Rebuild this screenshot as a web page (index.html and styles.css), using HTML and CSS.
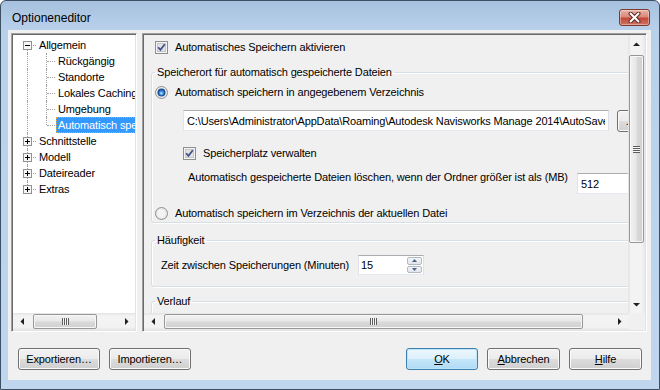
FILE: index.html
```html
<!DOCTYPE html>
<html lang="de">
<head>
    <meta charset="UTF-8">
    <title>Optioneneditor</title>
    <link rel="stylesheet" href="styles.css">
</head>
<body>
    <div class="window">
        <div class="titlebar">
            <span class="title">Optioneneditor</span>
            <span class="close-btn">
                <svg width="13" height="11" viewBox="0 0 13 11">
                    <path d="M2.5 1.5 L10.5 9.5 M10.5 1.5 L2.5 9.5" stroke="#5b2b26" stroke-width="4" stroke-linecap="round"/>
                    <path d="M2.5 1.5 L10.5 9.5 M10.5 1.5 L2.5 9.5" stroke="#fff" stroke-width="2" stroke-linecap="round"/>
                </svg>
            </span>
        </div>

        <div class="client">
            <div class="panels">
                <!-- Tree of option pages -->
                <div class="tree-panel sunken">
                    <ul class="tree">
                        <li class="tree-row">
                            <span class="guide root first">
                                <svg class="expander" width="9" height="9" viewBox="0 0 9 9"><rect x="0.5" y="0.5" width="8" height="8" fill="#f6f6f6" stroke="#919191"/><path d="M2 4.5H7" stroke="#000"/></svg>
                            </span>
                            <span class="tree-label">Allgemein</span>
                        </li>
                        <li class="tree-row">
                            <span class="guide pass"></span>
                            <span class="guide child"></span>
                            <span class="tree-label">Rückgängig</span>
                        </li>
                        <li class="tree-row">
                            <span class="guide pass"></span>
                            <span class="guide child"></span>
                            <span class="tree-label">Standorte</span>
                        </li>
                        <li class="tree-row">
                            <span class="guide pass"></span>
                            <span class="guide child"></span>
                            <span class="tree-label">Lokales Caching</span>
                        </li>
                        <li class="tree-row">
                            <span class="guide pass"></span>
                            <span class="guide child"></span>
                            <span class="tree-label">Umgebung</span>
                        </li>
                        <li class="tree-row">
                            <span class="guide pass"></span>
                            <span class="guide child last"></span>
                            <span class="tree-label selected">Automatisch speichern</span>
                        </li>
                        <li class="tree-row">
                            <span class="guide root">
                                <svg class="expander" width="9" height="9" viewBox="0 0 9 9"><rect x="0.5" y="0.5" width="8" height="8" fill="#f6f6f6" stroke="#919191"/><path d="M2 4.5H7M4.5 2V7" stroke="#000"/></svg>
                            </span>
                            <span class="tree-label">Schnittstelle</span>
                        </li>
                        <li class="tree-row">
                            <span class="guide root">
                                <svg class="expander" width="9" height="9" viewBox="0 0 9 9"><rect x="0.5" y="0.5" width="8" height="8" fill="#f6f6f6" stroke="#919191"/><path d="M2 4.5H7M4.5 2V7" stroke="#000"/></svg>
                            </span>
                            <span class="tree-label">Modell</span>
                        </li>
                        <li class="tree-row">
                            <span class="guide root">
                                <svg class="expander" width="9" height="9" viewBox="0 0 9 9"><rect x="0.5" y="0.5" width="8" height="8" fill="#f6f6f6" stroke="#919191"/><path d="M2 4.5H7M4.5 2V7" stroke="#000"/></svg>
                            </span>
                            <span class="tree-label">Dateireader</span>
                        </li>
                        <li class="tree-row">
                            <span class="guide root last">
                                <svg class="expander" width="9" height="9" viewBox="0 0 9 9"><rect x="0.5" y="0.5" width="8" height="8" fill="#f6f6f6" stroke="#919191"/><path d="M2 4.5H7M4.5 2V7" stroke="#000"/></svg>
                            </span>
                            <span class="tree-label">Extras</span>
                        </li>
                    </ul>
                    <div class="hscroll">
                        <span class="scroll-arrow"><svg width="4" height="7" viewBox="0 0 4 7"><path d="M4 0V7L0.5 3.5Z"/></svg></span>
                        <span class="thumb thumb-h tree-thumb"><span class="grip grip-h"></span></span>
                        <span class="scroll-arrow"><svg width="4" height="7" viewBox="0 0 4 7"><path d="M0 0V7L3.5 3.5Z"/></svg></span>
                    </div>
                </div>

                <!-- Option page -->
                <div class="options-panel sunken">
                    <div class="options-main">
                        <div class="options-content">
                            <div class="options-inner">
                                <label class="check-row top-check">
                                    <svg class="checkbox" width="13" height="13" viewBox="0 0 13 13"><rect x="0.5" y="0.5" width="12" height="12" fill="#f4f4f4" stroke="#8e8f8f"/><rect x="2.5" y="2.5" width="8" height="8" fill="#e2e2e2" stroke="#c6c6c6"/><path d="M3.2 6.3L5.4 8.8L9.8 3.2" fill="none" stroke="#3b4f8c" stroke-width="1.7"/></svg>
                                    <span>Automatisches Speichern aktivieren</span>
                                </label>

                                <fieldset class="group">
                                    <legend>Speicherort für automatisch gespeicherte Dateien</legend>
                                    <label class="check-row radio-first">
                                        <svg class="radio" width="13" height="13" viewBox="0 0 13 13"><circle cx="6.5" cy="6.5" r="6" fill="#ececec" stroke="#8e8f8f"/><circle cx="6.5" cy="6.5" r="4" fill="#1c4f94"/><circle cx="6.5" cy="6.8" r="2.6" fill="#3b8be0"/><circle cx="6.3" cy="7.3" r="1.2" fill="#9fd6f7"/></svg>
                                        <span>Automatisch speichern in angegebenem Verzeichnis</span>
                                    </label>
                                    <div class="path-row">
                                        <input class="textbox path-box" type="text" value="C:\Users\Administrator\AppData\Roaming\Autodesk Navisworks Manage 2014\AutoSave">
                                        <span class="btn browse-btn">...</span>
                                    </div>
                                    <label class="check-row space-check">
                                        <svg class="checkbox" width="13" height="13" viewBox="0 0 13 13"><rect x="0.5" y="0.5" width="12" height="12" fill="#f4f4f4" stroke="#8e8f8f"/><rect x="2.5" y="2.5" width="8" height="8" fill="#e2e2e2" stroke="#c6c6c6"/><path d="M3.2 6.3L5.4 8.8L9.8 3.2" fill="none" stroke="#3b4f8c" stroke-width="1.7"/></svg>
                                        <span>Speicherplatz verwalten</span>
                                    </label>
                                    <div class="size-row">
                                        <span class="size-label">Automatisch gespeicherte Dateien löschen, wenn der Ordner größer ist als (MB)</span>
                                        <input class="textbox size-box" type="text" value="512">
                                    </div>
                                    <label class="check-row radio-second">
                                        <svg class="radio" width="13" height="13" viewBox="0 0 13 13"><circle cx="6.5" cy="6.5" r="6" fill="#e6e6e6" stroke="#8e8f8f"/><circle cx="6.5" cy="6.5" r="4.2" fill="#f4f4f4"/></svg>
                                        <span>Automatisch speichern im Verzeichnis der aktuellen Datei</span>
                                    </label>
                                </fieldset>

                                <fieldset class="group frequency">
                                    <legend>Häufigkeit</legend>
                                    <div class="interval-row">
                                        <span class="interval-label">Zeit zwischen Speicherungen (Minuten)</span>
                                        <span class="spinner">
                                            <span class="spinner-value">15</span>
                                            <span class="spin-buttons">
                                                <span class="spin-btn"><svg width="5" height="3" viewBox="0 0 5 3"><path d="M0 3L2.5 0L5 3Z"/></svg></span>
                                                <span class="spin-btn"><svg width="5" height="3" viewBox="0 0 5 3"><path d="M0 0L2.5 3L5 0Z"/></svg></span>
                                            </span>
                                        </span>
                                    </div>
                                </fieldset>

                                <fieldset class="group history">
                                    <legend>Verlauf</legend>
                                </fieldset>
                            </div>
                        </div>
                        <div class="vscroll">
                            <span class="scroll-arrow"><svg width="7" height="4" viewBox="0 0 7 4"><path d="M0 4H7L3.5 0.5Z"/></svg></span>
                            <span class="thumb thumb-v"><span class="grip grip-v"></span></span>
                            <span class="scroll-arrow"><svg width="7" height="4" viewBox="0 0 7 4"><path d="M0 0H7L3.5 3.5Z"/></svg></span>
                        </div>
                    </div>
                    <div class="options-bottom">
                        <div class="hscroll">
                            <span class="scroll-arrow"><svg width="4" height="7" viewBox="0 0 4 7"><path d="M4 0V7L0.5 3.5Z"/></svg></span>
                            <span class="thumb thumb-h options-thumb"><span class="grip grip-h"></span></span>
                            <span class="scroll-arrow"><svg width="4" height="7" viewBox="0 0 4 7"><path d="M0 0V7L3.5 3.5Z"/></svg></span>
                        </div>
                        <div class="scroll-corner"></div>
                    </div>
                </div>
            </div>

            <div class="dialog-buttons">
                <div class="button-group">
                    <span class="btn">Exportieren…</span>
                    <span class="btn">Importieren…</span>
                </div>
                <div class="button-group right">
                    <span class="btn btn-default small"><u>O</u>K</span>
                    <span class="btn"><u>A</u>bbrechen</span>
                    <span class="btn"><u>H</u>ilfe</span>
                </div>
            </div>
        </div>
    </div>
</body>
</html>
```

FILE: styles.css
```css
* {
    margin: 0;
    padding: 0;
    box-sizing: border-box;
}

body {
    width: 660px;
    height: 390px;
    overflow: hidden;
    font-family: 'Liberation Sans', Arial, sans-serif;
    font-size: 11px;
    letter-spacing: -0.14px;
    color: #000;
    background: #ffffff;
}

.window {
    width: 660px;
    height: 390px;
    display: flex;
    flex-direction: column;
    border: 1px solid #3d4f63;
    border-radius: 6px 6px 0 0;
    background: linear-gradient(#a6c1de, #b8d0ea 28px, #bfd6ee);
}

/* Title bar */
.titlebar {
    height: 29px;
    display: flex;
    align-items: flex-start;
    padding: 0 9px 0 11px;
}

.title {
    font-size: 12px;
    line-height: 15px;
    margin-top: 10px;
    letter-spacing: 0;
}

.close-btn {
    margin-left: auto;
    margin-top: 8px;
    width: 31px;
    height: 17px;
    display: flex;
    align-items: center;
    justify-content: center;
    border: 1px solid #7d3a32;
    border-radius: 3px;
    background: linear-gradient(#e9b3a6, #d9897a 45%, #c3493a 55%, #cf7460);
    box-shadow: inset 0 0 0 1px rgba(255, 255, 255, 0.35);
}

/* Client area */
.client {
    flex: 1;
    margin: 0 8px 9px 7px;
    padding: 3px 4px 0 3px;
    background: #f0f0f0;
    display: flex;
    flex-direction: column;
}

.panels {
    display: flex;
    gap: 5px;
    height: 299px;
}

.sunken {
    border: 1px solid;
    border-color: #a0a0a0 #ffffff #ffffff #a0a0a0;
    padding: 1px;
    box-shadow: inset 1px 1px 0 #696969, inset -1px -1px 0 #e3e3e3;
}

/* Tree */
.tree-panel {
    width: 126px;
    display: flex;
    flex-direction: column;
    background: #fff;
}

.tree {
    flex: 1;
    list-style: none;
    padding: 2px 0 0 5px;
    overflow: hidden;
    background: #fff;
}

.tree-row {
    height: 16px;
    display: flex;
    white-space: nowrap;
}

.guide {
    position: relative;
    width: 19px;
    height: 16px;
    flex-shrink: 0;
}

.guide::before {
    content: '';
    position: absolute;
    left: 9px;
    top: 0;
    bottom: 0;
    border-left: 1px dotted #a0a0a0;
}

.guide.first::before {
    top: 8px;
}

.guide.last::before {
    bottom: 8px;
}

.guide.root::after,
.guide.child::after {
    content: '';
    position: absolute;
    left: 10px;
    top: 8px;
    width: 8px;
    border-top: 1px dotted #a0a0a0;
}

.expander {
    position: absolute;
    left: 5px;
    top: 4px;
    z-index: 1;
}

.tree-label {
    height: 16px;
    line-height: 16px;
    padding: 0 2px;
}

.tree-label.selected {
    background: #3399ff;
    color: #fff;
    outline: 1px dotted #e8a33c;
    outline-offset: -1px;
}

/* Scrollbars */
.hscroll {
    height: 17px;
    display: flex;
    background: linear-gradient(#e3e3e3, #f3f3f3 3px, #f3f3f3 14px, #e6e6e6);
}

.vscroll {
    width: 17px;
    display: flex;
    flex-direction: column;
    background: linear-gradient(to right, #e3e3e3, #f3f3f3 3px, #f3f3f3 14px, #e6e6e6);
}

.scroll-arrow {
    width: 17px;
    height: 17px;
    flex-shrink: 0;
    display: flex;
    align-items: center;
    justify-content: center;
}

.scroll-arrow svg {
    fill: #202020;
}

.thumb {
    display: flex;
    align-items: center;
    justify-content: center;
    border: 1px solid #979797;
    border-radius: 2px;
    box-shadow: inset 0 0 0 1px #f7f7f7;
}

.thumb-h {
    margin: 1px auto 1px 3px;
    background: linear-gradient(#f2f2f2, #e8e8e8 45%, #d9d9d9 55%, #d0d0d0);
}

.thumb-v {
    margin: 3px 1px auto 1px;
    height: 188px;
    background: linear-gradient(to right, #f2f2f2, #e8e8e8 45%, #d9d9d9 55%, #d0d0d0);
}

.tree-thumb {
    width: 64px;
}

.options-thumb {
    width: 419px;
}

.grip {
    width: 7px;
    height: 7px;
}

.grip-h {
    background: repeating-linear-gradient(to right, #5e5e5e 0 1px, #f6f6f6 1px 2px);
}

.grip-v {
    background: repeating-linear-gradient(#5e5e5e 0 1px, #f6f6f6 1px 2px);
}

/* Options page */
.options-panel {
    width: 505px;
    display: flex;
    flex-direction: column;
}

.options-main {
    flex: 1;
    display: flex;
    min-height: 0;
}

.options-content {
    flex: 1;
    overflow: hidden;
    background: #f0f0f0;
}

.options-inner {
    width: 530px;
}

.options-bottom {
    display: flex;
    height: 17px;
}

.options-bottom .hscroll {
    flex: 1;
}

.scroll-corner {
    width: 17px;
    background: #f0f0f0;
}

.check-row {
    height: 16px;
    display: flex;
    align-items: center;
    gap: 7px;
    white-space: nowrap;
}

.checkbox,
.radio {
    flex-shrink: 0;
}

.top-check {
    margin: 4px 0 0 11px;
}

.group {
    margin: 9px 0 0 7px;
    padding: 0 0 1px 0;
    border: 1px solid #d5dfe5;
    border-radius: 3px;
    box-shadow: inset 1px 1px 0 #fff, 1px 1px 0 #fff;
    min-width: 0;
}

.group legend {
    margin-left: 3px;
    padding: 0 2px;
    line-height: 16px;
}

.radio-first {
    margin: 4px 0 0 3px;
}

.path-row {
    display: flex;
    height: 21px;
    margin: 10px 0 0 31px;
}

.textbox {
    height: 21px;
    border: 1px solid;
    border-color: #abadb3 #dbdfe6 #e3e9ef #e2e3ea;
    background: #fff;
    font: inherit;
    letter-spacing: inherit;
    color: #000;
    padding: 0 3px;
    outline: none;
}

.path-box {
    width: 426px;
}

.browse-btn {
    height: 21px;
    margin-left: 8px;
}

.space-check {
    margin: 14px 0 0 31px;
}

.size-row {
    display: flex;
    align-items: flex-start;
    margin: 8px 0 0 36px;
}

.size-label {
    width: 389px;
    line-height: 16px;
    white-space: nowrap;
}

.size-box {
    width: 72px;
    margin-top: 4px;
}

.radio-second {
    margin: 11px 0 0 3px;
}

.frequency {
    padding-bottom: 11px;
}

.interval-row {
    display: flex;
    align-items: center;
    margin: 7px 0 0 9px;
}

.interval-label {
    width: 197px;
    white-space: nowrap;
}

.spinner {
    width: 66px;
    height: 20px;
    display: flex;
    border: 1px solid;
    border-color: #abadb3 #dbdfe6 #e3e9ef #e2e3ea;
    background: #fff;
}

.spinner-value {
    flex: 1;
    padding: 1px 2px;
    line-height: 16px;
}

.spin-buttons {
    width: 16px;
    display: flex;
    flex-direction: column;
    padding: 1px 1px 1px 0;
    gap: 1px;
}

.spin-btn {
    flex: 1;
    display: flex;
    align-items: center;
    justify-content: center;
    border: 1px solid #b4b8c0;
    border-radius: 2px;
    background: linear-gradient(#f4f6f9, #e1e5ea);
}

.spin-btn svg {
    fill: #4d6185;
}

.history {
    margin-top: 6px;
    height: 60px;
}

/* Dialog buttons */
.dialog-buttons {
    display: flex;
    margin-top: 16px;
    padding: 0 5px 0 7px;
}

.button-group {
    display: flex;
    gap: 9px;
}

.button-group.right {
    margin-left: auto;
}

.btn {
    width: 82px;
    height: 22px;
    display: flex;
    align-items: center;
    justify-content: center;
    border: 1px solid #707070;
    border-radius: 3px;
    background: linear-gradient(#f2f2f2, #ebebeb 50%, #dddddd 50%, #cfcfcf);
    box-shadow: inset 0 0 0 1px #fbfbfb;
    white-space: nowrap;
}

.button-group.right .btn {
    width: 73px;
}

.button-group.right .btn.small {
    width: 72px;
}

.btn-default {
    border-color: #3c7fb1;
    background: linear-gradient(#ecf7fd, #dcf0fb 50%, #c4e6f9 50%, #b0dbf5);
    box-shadow: inset 0 0 0 1px #bfe4f8;
}

.browse-btn {
    width: 26px;
}
```
